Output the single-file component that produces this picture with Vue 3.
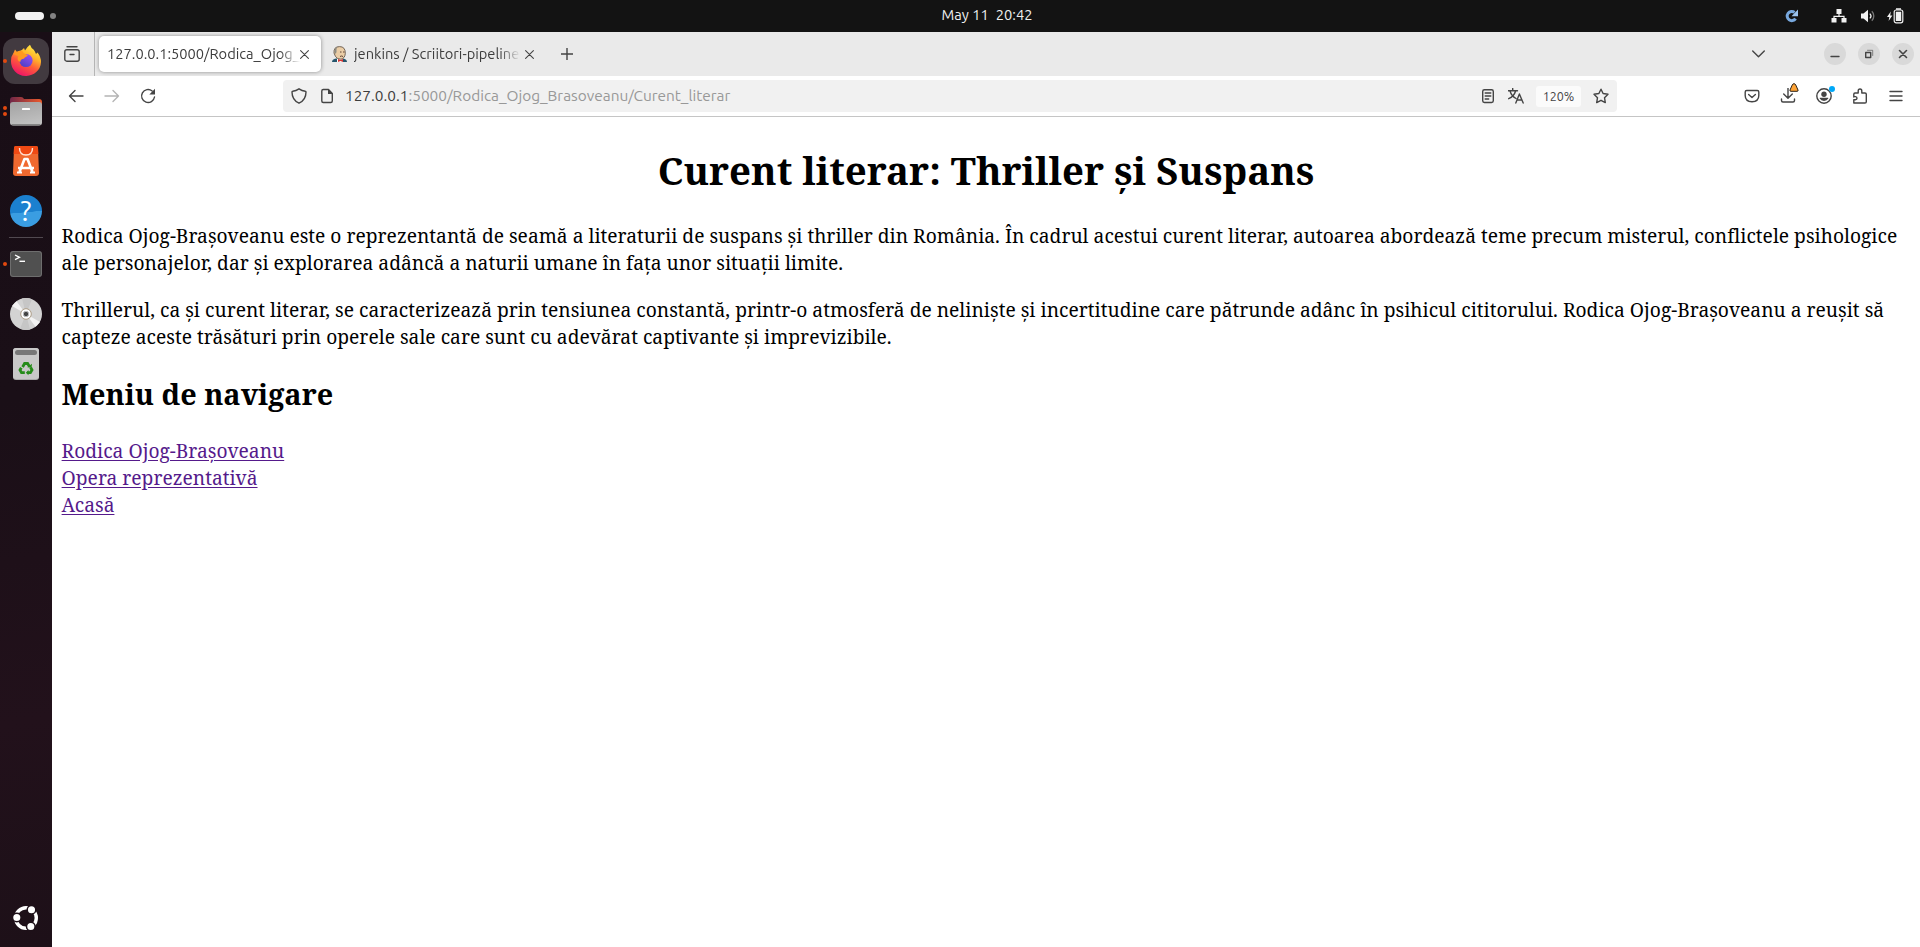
<script setup>
const paragraphs = [
  'Rodica Ojog-Brașoveanu este o reprezentantă de seamă a literaturii de suspans și thriller din România. În cadrul acestui curent literar, autoarea abordează teme precum misterul, conflictele psihologice ale personajelor, dar și explorarea adâncă a naturii umane în fața unor situații limite.',
  'Thrillerul, ca și curent literar, se caracterizează prin tensiunea constantă, printr-o atmosferă de neliniște și incertitudine care pătrunde adânc în psihicul cititorului. Rodica Ojog-Brașoveanu a reușit să capteze aceste trăsături prin operele sale care sunt cu adevărat captivante și imprevizibile.'
]
const links = ['Rodica Ojog-Brașoveanu', 'Opera reprezentativă', 'Acasă']
</script>

<template>
  <div class="desktop">
    <header class="topbar">
      <div class="workspaces"><i class="pill"></i><i class="dot"></i></div>
      <div class="clock"><span>May 11</span><span>20:42</span></div>
      <div class="tray">
        <svg class="t-update" width="14" height="14" viewBox="0 0 14 14"><path d="M10.6 9.6A4.6 4.6 0 1 1 9.6 3.4" fill="none" stroke="#78a8de" stroke-width="3"/><path d="M13 .6v6.6H6.6l2-2.2z" fill="#9cc3ee"/></svg>
        <svg class="t-net" width="16" height="14" viewBox="0 0 16 14"><path d="M5.5 0h5v5h-5zM.5 9h5v4.5h-5zM10.500 9h5v4.500h-5z" fill="#f2f2f2"/><path d="M8 4v3M3 9.500V7.300h10v2.200" fill="none" stroke="#f2f2f2" stroke-width="1.200"/></svg>
        <svg class="t-vol" width="16" height="14" viewBox="0 0 16 14"><path d="M1 4.500h2.500L8 .8v12.400L3.500 9.500H1z" fill="#f2f2f2"/><path d="M9.800 4.600a3.400 3.400 0 0 1 0 4.800" fill="none" stroke="#f2f2f2" stroke-width="1.300"/><path d="M11.800 2.300a6.500 6.500 0 0 1 0 9.400" fill="none" stroke="#777" stroke-width="1.300"/></svg>
        <svg class="t-bat" width="17" height="16" viewBox="0 0 17 16"><path d="M3.800 3.500 0 9h2.300L1.600 13 5.400 7.500H3.200z" fill="#f2f2f2"/><rect x="7.200" y="2" width="8.600" height="12.800" rx="2" fill="none" stroke="#f2f2f2" stroke-width="1.200"/><path d="M9 .3h5v1.500H9zM8.800 3.700h5.400v9.400H8.800z" fill="#f2f2f2"/></svg>
      </div>
    </header>

    <div class="main">
      <aside class="dock">
        <div class="cell active">
          <i class="run"></i>
          <svg width="32" height="32" viewBox="0 0 32 32">
            <defs>
              <linearGradient id="ff" x1=".8" y1="0" x2=".3" y2="1"><stop offset="0" stop-color="#fff14a"/><stop offset=".35" stop-color="#ffb52a"/><stop offset=".62" stop-color="#ff5a3a"/><stop offset="1" stop-color="#ee1169"/></linearGradient>
              <linearGradient id="fi" x1=".8" y1="0" x2=".2" y2="1"><stop offset="0" stop-color="#9a4ff5"/><stop offset="1" stop-color="#4b40c4"/></linearGradient>
            </defs>
            <path d="M3.500 9 5 5.500 7 8q2-1.800 4-1.600Q13 5.500 14 4l1 2.500Q17 3 20 .8q1 3.200 3.500 4.700Q25 7 26 10l1.500-1.500Q31 13 31 18A15 14.500 0 0 1 1 17q0-5 2.500-8z" fill="url(#ff)"/>
            <circle cx="16" cy="16.500" r="6.600" fill="url(#fi)"/>
            <path d="M3 10q5-4 9.500-2.800.5 2.300 4 3.300 2 .5.500 1.700-2.500 1-3.200 2.600-3.500.2-3.500 3.200Q6 16 8.500 12 5 10.500 3 10z" fill="#ff9a1f"/>
          </svg>
        </div>
        <div class="cell">
          <i class="run two"></i>
          <svg width="32" height="30" viewBox="0 0 32 30">
            <defs>
              <linearGradient id="fb"><stop offset="0" stop-color="#702748"/><stop offset="1" stop-color="#ed5b2c"/></linearGradient>
              <linearGradient id="fg" x2="0.300" y2="1"><stop offset="0" stop-color="#a2a2a2"/><stop offset="1" stop-color="#bfbfbf"/></linearGradient>
            </defs>
            <path d="M0 4q0-3 3-3h8q2 0 3 2h15q3 0 3 3v8H0z" fill="url(#fb)"/>
            <rect y="6" width="32" height="23.500" rx="3" fill="url(#fg)"/><path d="M1 28q1 1.500 3 1.500h24q2 0 3-1.500z" fill="#858585"/>
            <rect x="12" y="12" width="8" height="2" rx=".6" fill="#fff"/>
          </svg>
        </div>
        <div class="cell">
          <svg width="26" height="30" viewBox="0 0 26 30">
            <path d="M3 0h20q2 0 2 2l1 25q0 3-3 3H3q-3 0-3-3L1 2q0-2 2-2z" fill="#f0692f"/><path d="M3 0h20q2 0 2 2l.3 6H.7L1 2q0-2 2-2z" fill="#f04a14"/>
            <path d="M6.500 2q0 7 6.500 7t6.500-7" fill="none" stroke="#ffe0d2" stroke-width="1.400"/>
            <path d="m6.500 26 5-13h3l5 13M5 22h16" fill="none" stroke="#fff" stroke-width="2.600" stroke-linejoin="round"/><path d="M4 26.500h5M17 26.500h5" stroke="#fff" stroke-width="1.800"/>
          </svg>
        </div>
        <div class="cell"><div class="help">?</div></div>
        <div class="sep"></div>
        <div class="cell">
          <i class="run"></i>
          <svg width="32" height="26" viewBox="0 0 32 26"><rect width="32" height="26" rx="3" fill="#6e6e6e"/><rect x="1" y="1" width="30" height="24" rx="2.500" fill="#505050"/><path d="m5 4 4.500 2.300L5 8.600" fill="none" stroke="#fff" stroke-width="1.300"/><path d="M9.500 10.300h5.500" stroke="#fff" stroke-width="1.400"/></svg>
        </div>
        <div class="cell">
          <svg width="32" height="32" viewBox="0 0 32 32"><circle cx="16" cy="16" r="16" fill="#d3d3d3"/><path d="M16 16 2 8 6.500 3.200zM16 16l14 8-4.500 4.800z" fill="#f3f3f3"/><path d="M16 16 12 .6A16 16 0 0 1 22 1.200zM16 16l4 15.400A16 16 0 0 1 10 30.800z" fill="#c6c6c6"/><circle cx="16" cy="16" r="5.300" fill="#fff" stroke="#ad9d87"/><circle cx="16" cy="16" r="2.700" fill="#444" stroke="#bbb"/></svg>
        </div>
        <div class="cell">
          <svg width="26" height="32" viewBox="0 0 26 32"><rect width="26" height="32" rx="3" fill="#aaa"/><rect width="26" height="31" rx="3" fill="#c8c8c8"/><rect x="2" y="2" width="22" height="5" rx="2.500" fill="#777"/>
            <g fill="none" stroke="#258b19" stroke-width="2.800"><path d="m9.600 19 2-3.500h3l1.800 3"/><path d="m17.600 19.300 1.400 2.700-1.600 2.700h-2.900"/><path d="M11.800 24.700H8.500L7 22l1.300-2.300"/></g>
            <path d="m14.300 19.300 4.200.5.500-4zM15.500 22v5.200l-2.700-2.500z" fill="#258b19"/>
          </svg>
        </div>
        <div class="cell launcher">
          <svg width="26" height="26" viewBox="0 0 26 26"><circle cx="13" cy="13" r="10.300" fill="none" stroke="#fff" stroke-width="3.400"/><g fill="#fff" stroke="#1d1018" stroke-width="1.500"><circle cx="3.800" cy="12.500" r="4.300"/><circle cx="18.500" cy="4.700" r="4.300"/><circle cx="17.800" cy="21.500" r="4.300"/></g></svg>
        </div>
      </aside>

      <section class="browser">
        <div class="tabstrip">
          <div class="firefox-view">
            <svg width="16" height="16" viewBox="0 0 16 16" class="ic"><path d="M3 .8h10"/><rect x=".8" y="3.800" width="14.400" height="11.400" rx="2"/><path d="M6 8.500h4" /></svg>
          </div>
          <div class="tab selected">
            <span class="label">127.0.0.1:5000/Rodica_Ojog_</span>
            <svg class="close ic" width="9" height="9" viewBox="0 0 9 9"><path d="m.6.6 7.800 7.800M8.400.6.6 8.400"/></svg>
          </div>
          <div class="tab">
            <svg class="fav" width="15" height="16" viewBox="0 0 15 16"><path d="M0 16q0-3 4-3.500h7q4 .5 4 3.500z" fill="#26566c"/><path d="M5 12h6v4H5z" fill="#fff"/><path d="M2 7Q1.500.6 7.500.6t5.800 6.800q-.3 5-4.300 5.800-3.500.3-5.500-2.700z" fill="#eacda6" stroke="#655749" stroke-width=".9"/><path d="M2.500 6q-.7-4 3-5.300Q3.800 3 4.500 6l-.8 2z" fill="#8d8c84"/><path d="M8 6h1.500M11 6h1.500M8 10.500q1.500-1 3 0" stroke="#604536" fill="none"/><path d="m6 13 2.500 1L11 13v3l-2.500-1L6 16z" fill="#d33833"/></svg>
            <span class="label">jenkins / Scriitori-pipeline</span>
            <svg class="close ic" width="9" height="9" viewBox="0 0 9 9"><path d="m.6.6 7.800 7.800M8.400.6.6 8.400"/></svg>
          </div>
          <svg class="plus ic" width="12" height="12" viewBox="0 0 12 12"><path d="M6 0v12M0 6h12"/></svg>
          <div class="winctl">
            <svg class="ic chev" width="13" height="8" viewBox="0 0 13 8"><path d="m.7.900 5.800 5.800L12.300.9"/></svg>
            <b><svg class="ic" width="10" height="10" viewBox="0 0 10 10"><path d="M1 7.500h8"/></svg></b>
            <b><svg class="ic" width="10" height="10" viewBox="0 0 10 10"><path d="M1.700 3.500h5v5h-5z" stroke-width="1.400"/><path d="M3.500 1.300h5.200v5.200" stroke-width="1" opacity=".6"/></svg></b>
            <b><svg class="ic" width="10" height="10" viewBox="0 0 10 10"><path d="m1.500 1.500 7 7M8.500 1.500l-7 7" stroke-width="1.600"/></svg></b>
          </div>
        </div>

        <div class="toolbar">
          <div class="nav">
            <svg class="ic" width="16" height="16" viewBox="0 0 16 16"><path d="M15 8H1.500M7 2.500 1.500 8 7 13.500"/></svg>
            <svg class="ic off" width="16" height="16" viewBox="0 0 16 16"><path d="M1 8h13.500M9 2.500 14.500 8 9 13.500"/></svg>
            <svg class="ic" width="16" height="16" viewBox="0 0 16 16"><path d="M12.200 3A6.500 6.500 0 1 0 14.500 9"/><path d="M15 .8v5.700H9.300z" fill="#444" stroke="none"/></svg>
          </div>
          <div class="urlbar">
            <svg class="ic shield" width="16" height="16" viewBox="0 0 16 16"><path d="M8 .8q3 2 6.300 2.400.7 0 .7.800Q15 12 8 15.200 1 12 1 4q0-.8.7-.8Q5 2.800 8 .8z"/></svg>
            <svg class="ic doc" width="16" height="16" viewBox="0 0 16 16"><path d="M9.500 1.500H4.300q-1.500 0-1.500 1.500v10q0 1.500 1.500 1.500h7.500q1.500 0 1.500-1.500V5.500z"/><path d="M9 1v5h5z" fill="#444" stroke="none"/></svg>
            <span class="url"><em>127.0.0.1</em>:5000/Rodica_Ojog_Brasoveanu/Curent_literar</span>
            <svg class="ic reader" width="16" height="16" viewBox="0 0 16 16"><rect x="2.700" y="1.700" width="10.600" height="12.800" rx="1.700"/><path d="M5.200 5h5.600M5.200 8h5.600M5.200 11h3.500"/></svg>
            <svg class="ic trans" width="16" height="16" viewBox="0 0 16 16"><path d="M0 2.700h9.500M4.700.5v2M2 3q1.500 5 6 7.500M7.600 3Q6 8.500.7 10.700M7.800 15l3.600-9 3.800 9M9 12h5"/></svg>
            <span class="zoom">120%</span>
            <svg class="ic star" width="16" height="16" viewBox="0 0 16 16"><path d="m8 1.200 2.100 4.300 4.900.7-3.500 3.500.8 4.900L8 12.300l-4.300 2.300.8-4.900L1 6.200l4.900-.7z"/></svg>
          </div>
          <div class="actions">
            <svg class="ic" width="16" height="16" viewBox="0 0 16 16"><path d="M2.700 2.500h10.600q1.500 0 1.500 1.500v3.500q0 6-6.800 6.300-6.800-.3-6.800-6.300V4q0-1.500 1.500-1.500z"/><path d="M4.600 6.500 8 9.500l3.400-3"/></svg>
            <svg class="ic" width="16" height="16" viewBox="0 0 16 16"><path d="M8 0v10M3.700 6 8 10.300 12.300 6M1.500 11v1.500q0 1.500 1.500 1.500h10q1.500 0 1.500-1.500V11"/></svg>
            <svg class="ic" width="16" height="16" viewBox="0 0 16 16"><circle cx="8" cy="8" r="7.200"/><circle cx="8" cy="6.200" r="2.700" fill="#444" stroke="none"/><path d="M3.800 9.800h8.400v.8Q11 13 8 13t-4.200-2.400z" fill="#444" stroke="none"/></svg>
            <svg class="ic" width="16" height="16" viewBox="0 0 16 16"><path d="M1.800 9V6.300q0-1.300 1.200-1.300h3.200V3q0-2 1.800-2t1.800 2v2h3.200q1.300 0 1.300 1.300v7.500q0 1.200-1.300 1.200H1.800v-3.200h1.500q1.700-.2 1.700-1.600T3.500 8.600H1.800"/></svg>
            <svg class="ic" width="16" height="16" viewBox="0 0 16 16"><path d="M2 3.500h12M2 8h12M2 12.500h12"/></svg>
            <svg class="warn" width="10" height="9" viewBox="0 0 10 9"><path d="M5 .7q1.200 0 1.700 1.200L9 7q.4 1.300-.8 1.300H1.800Q.6 8.300 1 7l2.300-5.100Q3.800.7 5 .7z" fill="#ffa436" stroke="#2b2117"/></svg>
            <i class="notify"></i>
          </div>
        </div>

        <article class="page">
          <h1>Curent literar: Thriller și Suspans</h1>
          <p v-for="p in paragraphs" :key="p">{{ p }}</p>
          <h2>Meniu de navigare</h2>
          <nav><div v-for="l in links" :key="l"><a href="#">{{ l }}</a></div></nav>
        </article>
      </section>
    </div>
  </div>
</template>

<style>
body { margin: 0; overflow: hidden; }
</style>

<style scoped>
* { box-sizing: border-box; }
.desktop { width: 1920px; height: 947px; display: flex; flex-direction: column; background: #fff; font-family: Ubuntu, "Noto Sans", sans-serif; font-size: 14.667px; }
svg { display: block; flex: none; }
.topbar { height: 32px; background: #131313; display: grid; grid-template-columns: 1fr auto 1fr; align-items: center; color: #f0f0f0; }
.workspaces { display: flex; align-items: center; gap: 6px; padding-left: 15px; }
.pill { width: 29px; height: 8px; border-radius: 4px; background: #f2f2f2; }
.dot { width: 6px; height: 6px; border-radius: 50%; background: #828282; }
.clock { display: flex; gap: 7px; line-height: 30px; height: 32px; padding-left: 54px; }
.tray { display: flex; align-items: center; justify-content: flex-end; padding-right: 16px; }
.t-update { margin-right: 32px; }
.t-net { margin-right: 13px; }
.t-vol { margin-right: 11px; }
.main { flex: 1; display: flex; min-height: 0; }
.dock { width: 52px; flex: none; padding-top: 4px; display: flex; flex-direction: column; background: linear-gradient(170deg, #190e16 0%, #1a0f17 40%, #22111b 75%, #1d1018 100%); }
.cell { position: relative; height: 50px; flex: none; display: flex; align-items: center; justify-content: center; }
.active::before { content: ""; position: absolute; left: 3px; top: 2px; width: 46px; height: 46px; border-radius: 12px; background: #423a40; }
.active svg { position: relative; margin-bottom: 2px; }
.run { position: absolute; left: 3px; top: 23px; width: 4px; height: 4px; border-radius: 50%; background: #e2490f; }
.two { top: 20px; box-shadow: 0 6px #e2490f; }
.sep { height: 1px; margin: 1px 9px; background: #514950; flex: none; }
.help { width: 32px; height: 32px; border-radius: 50%; background: linear-gradient(175deg, #1b80cf 0 53%, #3a9de2 54%); color: #fff; font-size: 28px; line-height: 32px; text-align: center; }
.launcher { margin-top: auto; margin-bottom: 4px; }
.browser { flex: 1; min-width: 0; display: flex; flex-direction: column; }
.ic { fill: none; stroke: #444; stroke-width: 1.4; stroke-linecap: round; stroke-linejoin: round; }
.tabstrip { height: 44px; flex: none; background: #eaeaea; display: flex; align-items: center; color: #3d3d3d; }
.firefox-view { width: 43px; height: 44px; display: flex; align-items: center; padding-left: 12px; border-right: 1px solid #b5b5b5; margin-right: 4px; }
.tab { width: 222px; height: 36px; border-radius: 5px; display: flex; align-items: center; padding: 0 12px 0 8px; }
.selected { background: #fff; box-shadow: 0 0 4px rgba(0, 0, 0, .4); padding-left: 8px; }
.label { flex: 1; min-width: 0; white-space: nowrap; overflow: hidden; line-height: 20px; -webkit-mask-image: linear-gradient(to left, transparent, #000 20px); mask-image: linear-gradient(to left, transparent, #000 20px); margin-right: 0; }
.close { stroke-width: 1.1; }
.tab:not(.selected) { padding-left: 11px; padding-right: 9px; }
.fav { margin-right: 7px; }
.tab:not(.selected) .label { margin-right: 5px; }
.plus { margin-left: 18px; stroke-linecap: butt; }
.winctl { margin-left: auto; display: flex; align-items: center; gap: 12px; padding-right: 6px; }
.winctl b { width: 22px; height: 22px; border-radius: 50%; background: #d9d9d9; display: flex; align-items: center; justify-content: center; }
.chev { margin-right: 47px; }
.toolbar { height: 41px; flex: none; background: #fff; border-bottom: 1px solid #c5c5c5; display: flex; align-items: center; }
.nav { display: flex; gap: 20px; padding-left: 16px; width: 231px; }
.off { opacity: .4; }
.urlbar { width: 1334px; height: 32px; border-radius: 4px; background: #f1f1f1; display: flex; align-items: center; padding: 0 8px; }
.doc { margin-left: 12px; }
.url { flex: 1; margin-left: 10px; font-size: 15.4px; color: #989898; line-height: 20px; }
.url em { font-style: normal; color: #3d3d3d; }
.trans { margin: 0 12px; }
.zoom { width: 45px; height: 21px; border-radius: 3px; background: #fbfbfb; font-size: 12.5px; line-height: 21px; text-align: center; color: #444; margin-right: 12px; }
.actions { position: relative; margin-left: auto; display: flex; gap: 20px; padding-right: 16px; }
.warn { position: absolute; left: 45px; top: -5px; }
.notify { position: absolute; left: 85px; top: -2px; width: 6px; height: 6px; border-radius: 50%; background: #00a8f8; }
.page { padding: 26.7px 9.6px 0; font-family: "Noto Serif", "DejaVu Serif Condensed", serif; font-size: 19.2px; line-height: 27px; color: #000; }
h1 { margin: 0; font-size: 38.4px; line-height: 53px; text-align: center; }
p { margin: 19.2px 0 0; letter-spacing: .009px; }
h1 + p { margin-top: 25.7px; }
h2 { margin: 24.9px 0 22.9px; font-size: 28.8px; line-height: 40px; }
a { color: #551a8b; text-decoration: underline; text-underline-offset: 2px; }
</style>
